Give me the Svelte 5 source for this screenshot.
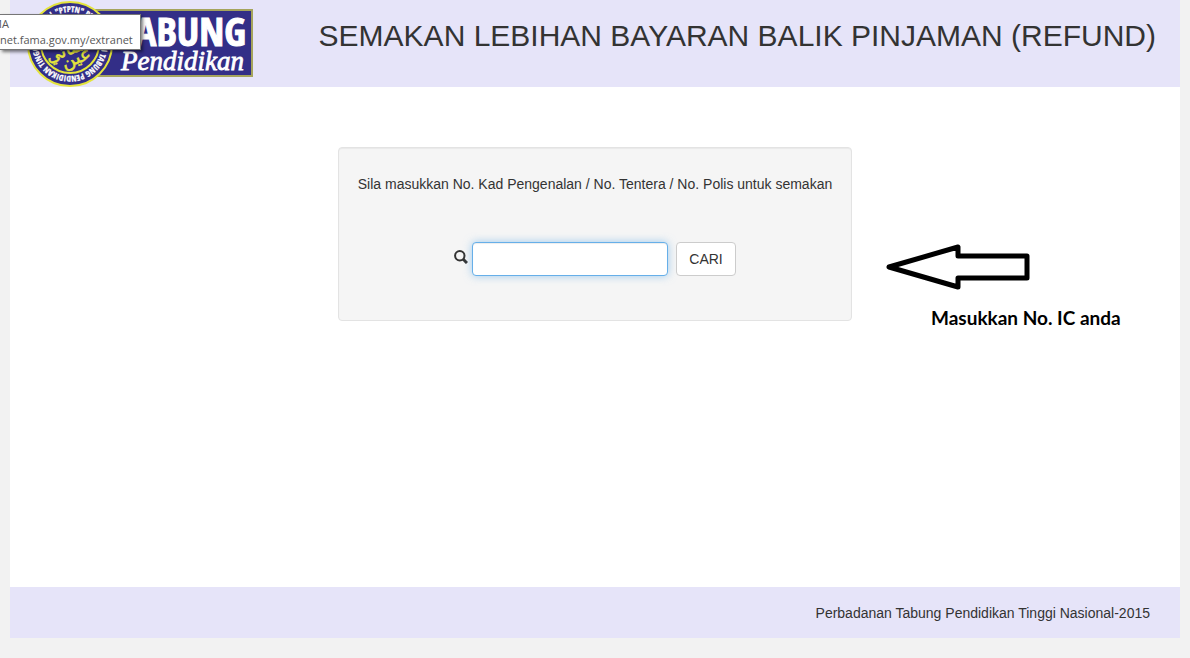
<script>
	let noKp = $state('');
	const ring = '"PTPTN" PERBADANAN TABUNG PENDIDIKAN TINGGI NASIONAL';
</script>

<div class="page">
	<header>
		<svg class="logo" viewBox="0 0 228 87" role="img" aria-label="Tabung Pendidikan">
			<defs>
				<path id="ring" d="M44 12 a32 32 0 1 1 -0.1 0" />
			</defs>
			<rect x="60" y="10" width="166" height="66" fill="#332e87" stroke="#a5a45c" stroke-width="2" />
			<text class="tabung" x="220" y="46">TABUNG</text>
			<text class="pendidikan" x="95" y="70">Pendidikan</text>
			<circle cx="44" cy="44" r="42" fill="#332e87" stroke="#e4e43c" stroke-width="2" />
			<text class="ring" transform="rotate(-25 44 44)"><textPath href="#ring">{ring}</textPath></text>
			<circle cx="44" cy="44" r="29" fill="#332e87" stroke="#e4e43c" stroke-width="2" />
			<g class="jawi" transform="rotate(-20 44 44)">
				<text x="44" y="36">تابوڠ</text>
				<text x="38" y="54">ينتاتي</text>
				<text x="45" y="65">عين</text>
			</g>
		</svg>
		<h1>SEMAKAN LEBIHAN BAYARAN BALIK PINJAMAN (REFUND)</h1>
		<div class="tip">
			<span class="tip-name">MA</span>
			<span>net.fama.gov.my/extranet</span>
		</div>
	</header>

	<main>
		<form class="well" onsubmit={(e) => e.preventDefault()}>
			<label for="nokp">Sila masukkan No. Kad Pengenalan / No. Tentera / No. Polis untuk semakan</label>
			<div class="search">
				<svg class="glass" viewBox="0 0 14 14" aria-hidden="true">
					<circle cx="5.8" cy="5.8" r="4.7" />
					<path d="M9 9 L13 13" />
				</svg>
				<input id="nokp" type="text" bind:value={noKp} />
				<button type="submit">CARI</button>
			</div>
		</form>

		<div class="note">
			<svg viewBox="0 0 146 48" aria-hidden="true">
				<path d="M4 24 L73 4 V13 H142 V35 H73 V44 Z" />
			</svg>
			<p>Masukkan No. IC anda</p>
		</div>
	</main>

	<footer>Perbadanan Tabung Pendidikan Tinggi Nasional-2015</footer>
</div>

<style>
	:global(body) {
		background: #f2f2f2;
	}

	.page {
		margin: 0 10px 20px;
		font-family: 'Liberation Sans', Arial, sans-serif;
		font-size: 14px;
		line-height: 20px;
		color: #333;
	}

	header {
		position: relative;
		display: flex;
		align-items: flex-start;
		justify-content: space-between;
		padding: 0 24px 0 16px;
		background: #e6e4f9;
	}

	.logo {
		display: block;
		flex: none;
		width: 228px;
		height: 87px;
	}

	.tabung {
		font: bold 40px 'Liberation Sans Narrow', 'Arial Narrow', 'Open Sans Condensed', sans-serif;
		fill: #fff;
		stroke: #fff;
		stroke-width: 1;
		text-anchor: end;
	}

	.pendidikan {
		font: italic 27px 'Liberation Serif', serif;
		fill: #fff;
		stroke: #fff;
		stroke-width: 0.8;
	}

	.ring {
		font: bold 8px 'Liberation Sans Narrow', 'Arial Narrow', 'Open Sans Condensed', sans-serif;
		fill: #fff;
		stroke: #fff;
		stroke-width: 0.3;
	}

	.jawi {
		font: 18px 'DejaVu Sans', sans-serif;
		fill: #e4e43c;
		stroke: #e4e43c;
		stroke-width: 0.5;
		text-anchor: middle;
	}

	h1 {
		margin: 18px 0 0;
		font-size: 30px;
		font-weight: 400;
		line-height: 36px;
	}

	.tip {
		position: absolute;
		top: 14px;
		left: -10px;
		display: flex;
		flex-direction: column;
		padding: 1px 7px 1px 0;
		border: 1px solid #767676;
		border-left: 0;
		background: #fff;
		box-shadow: 2px 2px 3px rgba(0, 0, 0, 0.5);
		font-family: 'Open Sans', 'Noto Sans', sans-serif;
		font-size: 11px;
		line-height: 16px;
		color: #575757;
		overflow: hidden;
	}

	.tip-name {
		margin-left: -8px;
	}

	main {
		position: relative;
		box-sizing: border-box;
		min-height: 500px;
		padding-top: 60px;
		background: #fff;
	}

	.well {
		box-sizing: border-box;
		width: fit-content;
		margin: 0 auto;
		padding: 26px 19px 44px;
		border: 1px solid #e3e3e3;
		border-radius: 4px;
		background: #f5f5f5;
		box-shadow: inset 0 1px 1px rgba(0, 0, 0, 0.05);
	}

	label {
		display: block;
	}

	.search {
		display: flex;
		justify-content: center;
		margin-top: 48px;
	}

	.glass {
		width: 14px;
		height: 14px;
		margin: 8px 4px 0 0;
		fill: none;
		stroke: #333;
		stroke-width: 2;
	}

	.glass path {
		stroke-width: 3;
	}

	input,
	button {
		box-sizing: border-box;
		height: 34px;
		padding: 6px 12px;
		border: 1px solid #ccc;
		border-radius: 4px;
		background: #fff;
		font: inherit;
		color: #333;
	}

	input {
		width: 196px;
		margin-right: 8px;
		border-color: #66afe9;
		outline: 0;
		box-shadow: inset 0 1px 1px rgba(0, 0, 0, 0.075), 0 0 8px rgba(102, 175, 233, 0.6);
	}

	.note {
		position: absolute;
		top: 156px;
		left: calc(50% + 290px);
		color: #000;
	}

	.note svg {
		display: block;
		width: 146px;
		height: 48px;
		fill: #fff;
		stroke: #000;
		stroke-width: 5;
		stroke-linejoin: round;
	}

	.note p {
		margin: 15px 0 0 46px;
		font: bold 19px/24px Lato, Carlito, sans-serif;
		white-space: nowrap;
	}

	footer {
		padding: 16px 30px 15px;
		background: #e6e4f9;
		text-align: right;
	}
</style>
